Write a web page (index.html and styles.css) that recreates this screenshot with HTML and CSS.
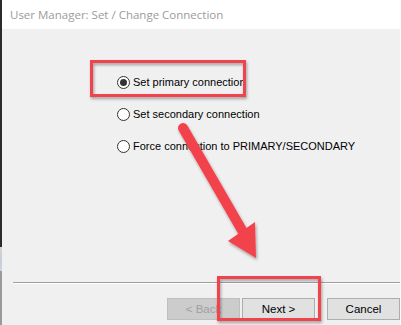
FILE: index.html
```html
<!DOCTYPE html>
<html lang="en">
<head>
    <meta charset="UTF-8">
    <title>User Manager: Set / Change Connection</title>
    <link rel="stylesheet" href="styles.css">
</head>
<body>
    <div class="screen">
        <div class="edge"></div>

        <div class="dialog">
            <div class="titlebar">User Manager: Set / Change Connection</div>

            <!-- Connection options -->
            <div class="content">
                <label class="option">
                    <span class="radio checked"></span>
                    <span>Set primary connection</span>
                </label>
                <label class="option">
                    <span class="radio"></span>
                    <span>Set secondary connection</span>
                </label>
                <label class="option">
                    <span class="radio"></span>
                    <span>Force connection to PRIMARY/SECONDARY</span>
                </label>
            </div>

            <div class="separator"></div>

            <div class="buttons">
                <button class="btn" disabled>&lt; Back</button>
                <button class="btn">Next &gt;</button>
                <button class="btn cancel">Cancel</button>
            </div>
        </div>

        <!-- Annotation drawn over the screenshot -->
        <svg class="marks" width="401" height="325" viewBox="0 0 401 325">
            <defs>
                <filter id="shadow" x="-20%" y="-20%" width="140%" height="140%">
                    <feDropShadow dx="1" dy="2" stdDeviation="1.5" flood-color="#000" flood-opacity="0.35"/>
                </filter>
            </defs>
            <g filter="url(#shadow)" fill="none" stroke="#f2434b" stroke-width="3">
                <rect x="91.5" y="61.5" width="153" height="34"/>
                <rect x="218.5" y="277.5" width="101" height="42"/>
            </g>
            <g filter="url(#shadow)" fill="#f2434b">
                <line x1="183" y1="128" x2="243" y2="232" stroke="#f2434b" stroke-width="10" stroke-linecap="round"/>
                <polygon points="228,241 256,258 255,222"/>
            </g>
        </svg>
    </div>
</body>
</html>
```

FILE: styles.css
```css
/* dialog screenshot */
body {
    margin: 0;
    padding: 0;
    background: #f0f0f0;
    font-family: "Liberation Sans", Arial, sans-serif;
}

.screen {
    position: relative;
    display: flex;
    width: 401px;
    height: 325px;
    overflow: hidden;
}

.edge {
    width: 2px;
    background: linear-gradient(to bottom, #2b2b2b 0, #2b2b2b 247px, #d4d4d4 247px, #c4cedc 262px, #d4d4d4 271px, #9a9a9a 271px);
}

.dialog {
    flex: 1;
    display: flex;
    flex-direction: column;
    background: #f0f0f0;
    border-right: 1px solid #fff;
}

.titlebar {
    height: 29px;
    line-height: 29px;
    padding-left: 8px;
    background: #fff;
    color: #9b9b9b;
    font-family: "Open Sans", "Noto Sans", sans-serif;
    font-size: 11.5px;
}

.content {
    height: 253px;
    padding: 37px 0 0 115px;
    box-sizing: border-box;
}

.option {
    display: flex;
    align-items: center;
    gap: 3px;
    height: 32px;
    font-size: 11px;
    color: #000;
}

.radio {
    width: 11px;
    height: 11px;
    border: 1px solid #333;
    border-radius: 50%;
    background: #fff;
    display: flex;
    align-items: center;
    justify-content: center;
}

.radio.checked::after {
    content: "";
    width: 7px;
    height: 7px;
    border-radius: 50%;
    background: #333;
}

.separator {
    height: 1px;
    margin-left: 11px;
    background: #a0a0a0;
    border-bottom: 1px solid #fff;
}

.buttons {
    display: flex;
    justify-content: flex-end;
    gap: 2px;
    padding-top: 14px;
}

.btn {
    width: 73px;
    height: 22px;
    padding: 0;
    background: #e1e1e1;
    border: 1px solid #adadad;
    font-family: "Liberation Sans", Arial, sans-serif;
    font-size: 11.5px;
    color: #000;
}

.btn:disabled {
    background: #cccccc;
    border-color: #bfbfbf;
    color: #a0a0a0;
}

.btn.cancel {
    margin-left: 10px;
}

.marks {
    position: absolute;
    left: 0;
    top: 0;
    pointer-events: none;
}
```
